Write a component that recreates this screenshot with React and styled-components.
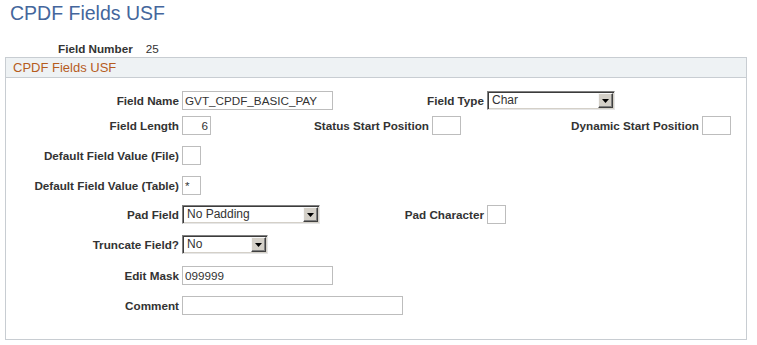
import React from "react";
import styled, { createGlobalStyle } from "styled-components";

const GlobalStyle = createGlobalStyle`
  html, body { margin: 0; padding: 0; background: #fff; }
  body { font-family: "Liberation Sans", Arial, sans-serif; color: #333; }
`;

const Page = styled.div`
  width: 757px;
  height: 345px;
  overflow: hidden;
  background: #fff;
`;

const Title = styled.h1`
  margin: 0;
  padding: 2px 0 0 10px;
  font-size: 19.5px;
  font-weight: normal;
  line-height: 23px;
  color: #44669c;
`;

const KeyRow = styled.div`
  display: flex;
  gap: 13px;
  margin-top: 17px;
  padding-left: 58px;
  font-size: 11.7px;
  line-height: 14px;
`;

const KeyLabel = styled.span`
  font-weight: bold;
  color: #333;
`;

const KeyValue = styled.span`
  color: #333;
`;

const Group = styled.section`
  margin: 1px 0 0 5px;
  width: 742px;
  height: 283px;
  box-sizing: border-box;
  border: 1px solid #c8cdd2;
`;

const GroupHeader = styled.div`
  height: 19px;
  padding-left: 7px;
  background: #eef2f4;
  border-bottom: 1px solid #c8cdd2;
  font-size: 13px;
  line-height: 19px;
  color: #b65c1e;
`;

const GroupBody = styled.div`
  padding-top: 13px;
  display: flex;
  flex-direction: column;
`;

const Row = styled.div`
  display: flex;
  align-items: center;
  height: 19px;
  margin-top: ${(p) => p.$mt || 0}px;
`;

const Label = styled.label`
  flex: none;
  width: ${(p) => p.$w}px;
  box-sizing: border-box;
  padding-right: 3px;
  text-align: right;
  white-space: nowrap;
  font-size: 11.7px;
  font-weight: bold;
  color: #333;
`;

const TextInput = styled.input`
  flex: none;
  width: ${(p) => p.$w}px;
  height: 19px;
  box-sizing: border-box;
  margin: 0;
  padding: 0 2px;
  border: 1px solid #bdbdbd;
  border-radius: 0;
  outline: none;
  background: #fff;
  font-family: "Liberation Sans", Arial, sans-serif;
  font-size: 11.7px;
  color: #333;
  text-align: ${(p) => p.$align || "left"};
`;

const SelectBox = styled.div`
  flex: none;
  display: flex;
  align-items: stretch;
  width: ${(p) => p.$w}px;
  height: 19px;
  box-sizing: border-box;
  padding: 1px;
  border: 1px solid;
  border-color: #808080 #e6e6e6 #e6e6e6 #808080;
  box-shadow: inset 1px 1px 0 #3c3c3c, inset -1px -1px 0 #d4d0c8;
  background: #fff;
`;

const SelectValue = styled.span`
  flex: 1;
  padding-left: 3px;
  font-size: 12px;
  line-height: 15px;
  color: #333;
  white-space: nowrap;
  overflow: hidden;
`;

const ArrowButton = styled.span`
  flex: none;
  width: 15px;
  box-sizing: border-box;
  display: flex;
  align-items: center;
  justify-content: center;
  background: #d4d0c8;
  border: 1px solid;
  border-color: #f8f8f8 #404040 #404040 #f8f8f8;
  box-shadow: inset -1px -1px 0 #808080;
`;

function Select({ w, value }) {
  return (
    <SelectBox $w={w}>
      <SelectValue>{value}</SelectValue>
      <ArrowButton>
        <svg width="7" height="4" viewBox="0 0 7 4">
          <polygon points="0,0 7,0 3.5,4" fill="#000" />
        </svg>
      </ArrowButton>
    </SelectBox>
  );
}

export default function App() {
  return (
    <Page>
      <GlobalStyle />
      <Title>CPDF Fields USF</Title>
      <KeyRow>
        <KeyLabel>Field Number</KeyLabel>
        <KeyValue>25</KeyValue>
      </KeyRow>
      <Group>
        <GroupHeader>CPDF Fields USF</GroupHeader>
        <GroupBody>
          <Row>
            <Label $w={176}>Field Name</Label>
            <TextInput $w={151} value="GVT_CPDF_BASIC_PAY" readOnly />
            <Label $w={154}>Field Type</Label>
            <Select w={128} value="Char" />
          </Row>
          <Row $mt={6}>
            <Label $w={176}>Field Length</Label>
            <TextInput $w={29} $align="right" value="6" readOnly />
            <Label $w={221}>Status Start Position</Label>
            <TextInput $w={29} value="" readOnly />
            <Label $w={241}>Dynamic Start Position</Label>
            <TextInput $w={29} value="" readOnly />
          </Row>
          <Row $mt={11}>
            <Label $w={176}>Default Field Value (File)</Label>
            <TextInput $w={19} value="" readOnly />
          </Row>
          <Row $mt={11}>
            <Label $w={176}>Default Field Value (Table)</Label>
            <TextInput $w={19} value="*" readOnly />
          </Row>
          <Row $mt={10}>
            <Label $w={176}>Pad Field</Label>
            <Select w={138} value="No Padding" />
            <Label $w={167}>Pad Character</Label>
            <TextInput $w={19} value="" readOnly />
          </Row>
          <Row $mt={11}>
            <Label $w={176}>Truncate Field?</Label>
            <Select w={86} value="No" />
          </Row>
          <Row $mt={12}>
            <Label $w={176}>Edit Mask</Label>
            <TextInput $w={151} value="099999" readOnly />
          </Row>
          <Row $mt={11}>
            <Label $w={176}>Comment</Label>
            <TextInput $w={221} value="" readOnly />
          </Row>
        </GroupBody>
      </Group>
    </Page>
  );
}
